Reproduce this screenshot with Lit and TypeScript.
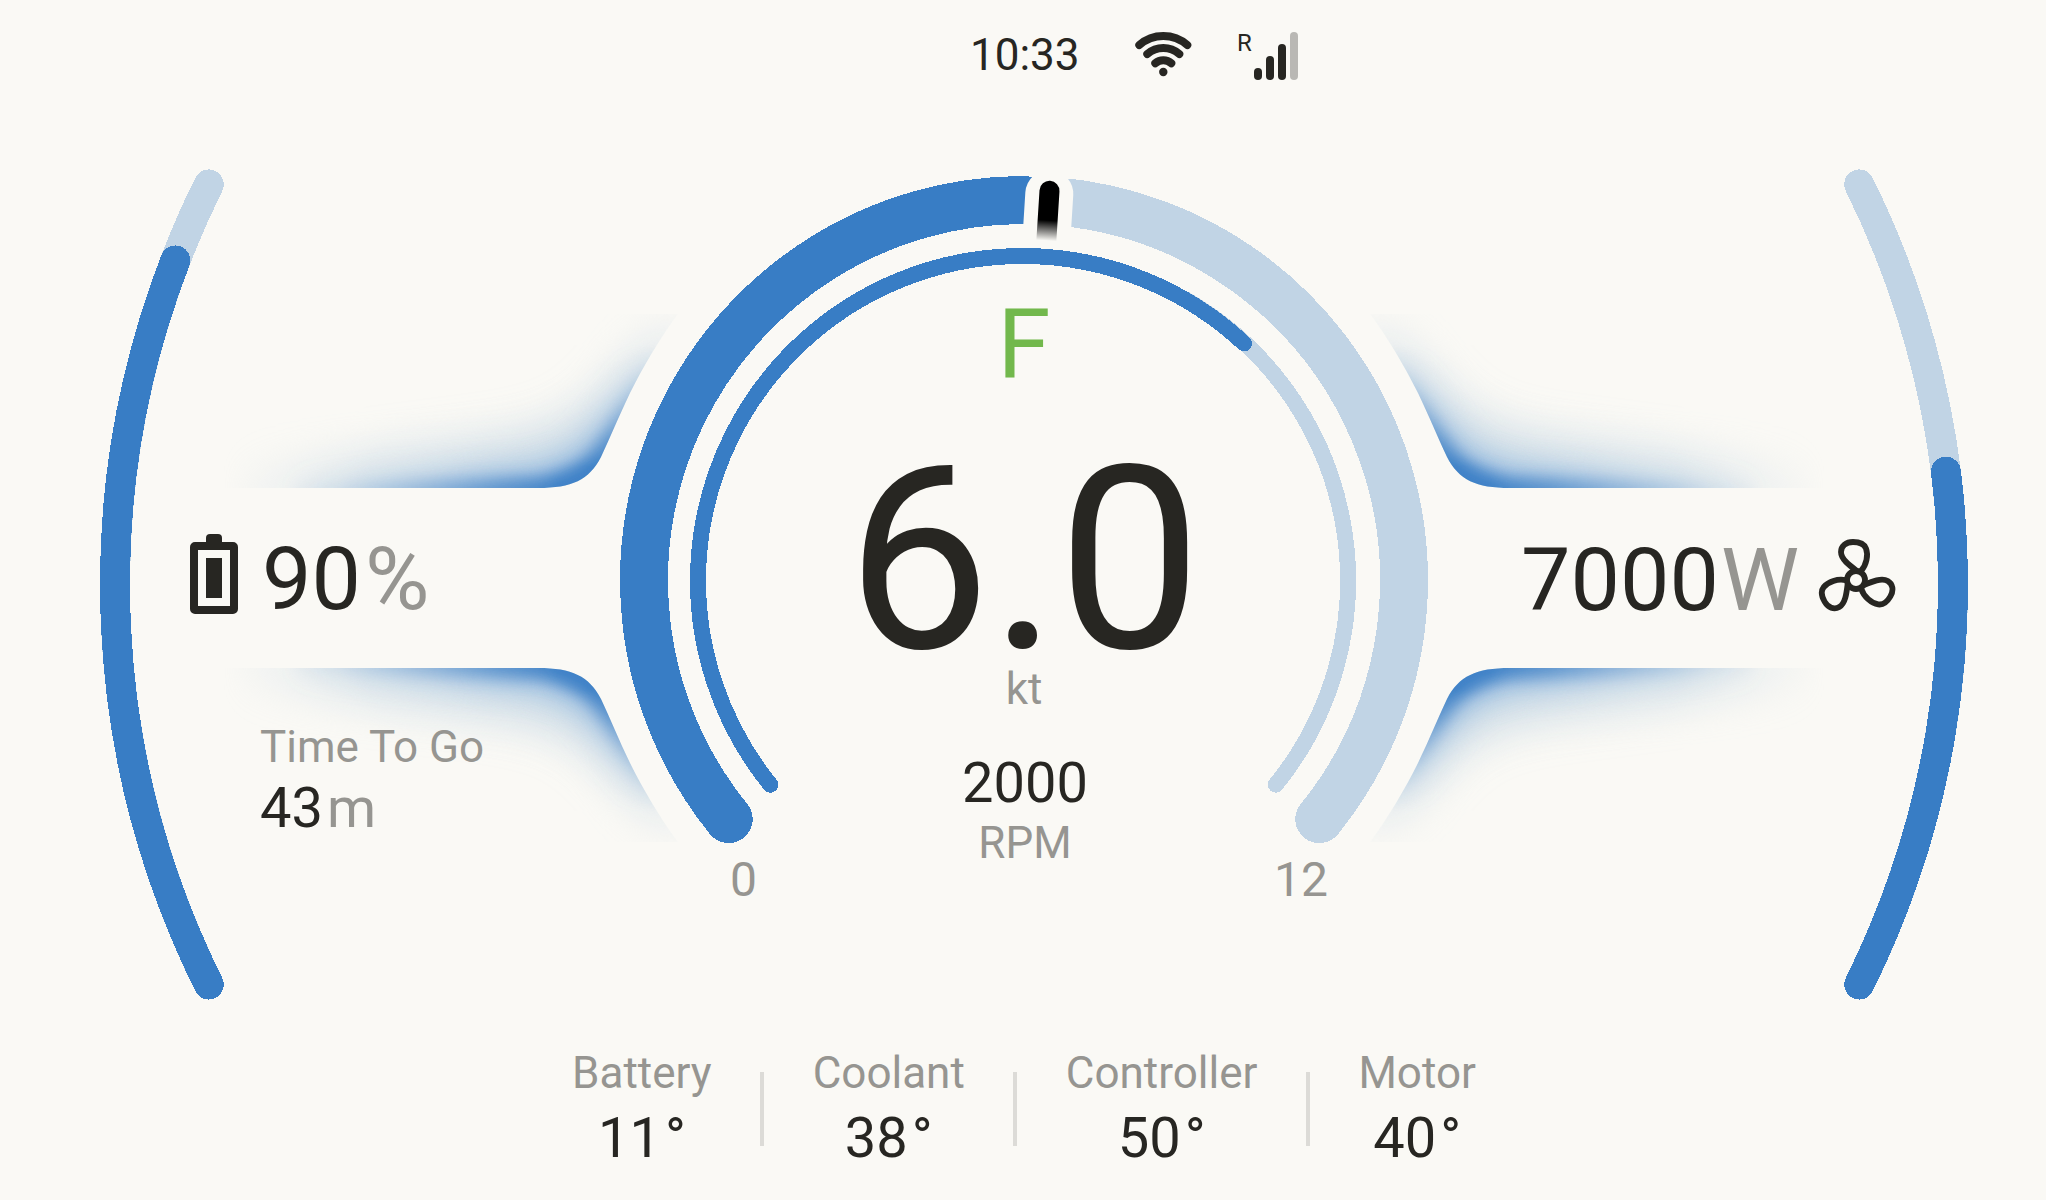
import { LitElement, html, svg, css } from "lit";
import { customElement, property } from "lit/decorators.js";

const polar = (cx: number, cy: number, r: number, deg: number) => {
  const a = (deg * Math.PI) / 180;
  return `${(cx + r * Math.sin(a)).toFixed(2)} ${(cy - r * Math.cos(a)).toFixed(2)}`;
};

// angles are degrees clockwise from 12 o'clock
const arc = (cx: number, cy: number, r: number, from: number, to: number) => {
  const large = Math.abs(to - from) > 180 ? 1 : 0;
  const sweep = to > from ? 1 : 0;
  return `M${polar(cx, cy, r, from)} A${r} ${r} 0 ${large} ${sweep} ${polar(cx, cy, r, to)}`;
};

@customElement("gauge-canvas")
export class GaugeCanvas extends LitElement {
  static styles = css`
    :host {
      display: block;
    }
    svg {
      display: block;
    }
    .arc {
      fill: none;
      stroke-linecap: round;
      shape-rendering: crispEdges;
    }
    .track {
      stroke: #c1d4e5;
    }
    .value {
      stroke: #387dc5;
    }
    .main {
      stroke-width: 48;
    }
    .inner {
      stroke-width: 16;
    }
    .side {
      stroke-width: 30;
    }
    .needle-gap {
      fill: #faf9f5;
    }
    .fade-mask {
      mask-type: alpha;
    }
  `;

  // upper right wing, the other three are mirrored copies
  wing() {
    return svg`
      <g clip-path="url(#wing-clip)">
        <g mask="url(#wing-mask)">
          <path
            d="M1350 300 L1385 298 Q1440 385 1474 406 Q1497 424 1560 433 L1840 470 V530 H1400 Z"
            fill="#c1d4e2" opacity="0.64" filter="url(#blur-wide)" />
        </g>
        <g mask="url(#wing-core-mask)">
          <path
            d="M1370 320 L1400 330 Q1440 400 1464 430 Q1482 453 1520 460 L1760 480 V530 H1400 Z"
            fill="#8fb6df" opacity="0.66" filter="url(#blur-mid)" />
          <path
            d="M1375 335 L1391 338 Q1431 412 1450 441 Q1466 468 1510 477 L1760 487 V530 H1400 Z"
            fill="#387dc5" opacity="0.94" filter="url(#blur-tight)" />
        </g>
      </g>
    `;
  }

  render() {
    return html`
      <svg width="2046" height="1200" viewBox="0 0 2046 1200">
        <defs>
          <clipPath id="wing-clip">
            <path
              d="M1370 314 C1388 338 1405 367 1418 393 C1430 418 1438 438 1447 457 C1459 480 1476 488 1510 488 H1826 V314 Z" />
          </clipPath>
          <filter id="blur-wide" filterUnits="userSpaceOnUse" x="1200" y="150" width="800" height="500">
            <feGaussianBlur stdDeviation="19" />
          </filter>
          <filter id="blur-mid" filterUnits="userSpaceOnUse" x="1200" y="150" width="800" height="500">
            <feGaussianBlur stdDeviation="12" />
          </filter>
          <filter id="blur-tight" filterUnits="userSpaceOnUse" x="1200" y="150" width="800" height="500">
            <feGaussianBlur stdDeviation="8" />
          </filter>
          <radialGradient
            id="wing-fade"
            gradientUnits="userSpaceOnUse"
            cx="0"
            cy="0"
            r="1"
            gradientTransform="translate(1460 480) scale(366 186)"
          >
            <stop offset="0.2" stop-color="#fff" />
            <stop offset="0.6" stop-color="#fff" stop-opacity="0.75" />
            <stop offset="0.85" stop-color="#fff" stop-opacity="0.25" />
            <stop offset="1" stop-color="#fff" stop-opacity="0" />
          </radialGradient>
          <radialGradient
            id="wing-core-fade"
            gradientUnits="userSpaceOnUse"
            cx="0"
            cy="0"
            r="1"
            gradientTransform="translate(1460 480) scale(310 138)"
          >
            <stop offset="0.1" stop-color="#fff" />
            <stop offset="0.3" stop-color="#fff" stop-opacity="0.8" />
            <stop offset="0.5" stop-color="#fff" stop-opacity="0.54" />
            <stop offset="0.8" stop-color="#fff" stop-opacity="0.16" />
            <stop offset="1" stop-color="#fff" stop-opacity="0" />
          </radialGradient>
          <mask id="wing-mask" class="fade-mask" maskUnits="userSpaceOnUse" x="1340" y="290" width="520" height="220">
            <rect x="1340" y="290" width="520" height="220" fill="url(#wing-fade)" />
          </mask>
          <mask id="wing-core-mask" class="fade-mask" maskUnits="userSpaceOnUse" x="1340" y="290" width="520" height="220">
            <rect x="1340" y="290" width="520" height="220" fill="url(#wing-core-fade)" />
          </mask>
          <linearGradient id="needle-fade" x1="0" y1="0" x2="0" y2="1">
            <stop offset="0.66" stop-color="#000" />
            <stop offset="1" stop-color="#000" stop-opacity="0" />
          </linearGradient>
        </defs>

        ${this.wing()}
        <g transform="translate(0 1156) scale(1 -1)">${this.wing()}</g>
        <g transform="translate(2048 0) scale(-1 1)">${this.wing()}</g>
        <g transform="translate(2048 1156) scale(-1 -1)">${this.wing()}</g>

        <path class="arc side track" d=${arc(1015, 584.5, 900, 243.61, 296.39)} />
        <path class="arc side value" d=${arc(1015, 584.5, 900, 243.61, 291.1)} />
        <path class="arc side track" d=${arc(1053, 584.5, 900, 116.39, 63.61)} />
        <path class="arc side value" d=${arc(1053, 584.5, 900, 116.39, 82.8)} />

        <path class="arc main track" d=${arc(1024, 580, 380, 5, 129)} />
        <path class="arc main value" d=${arc(1024, 580, 380, -129, 0)} />
        <path class="arc inner track" d=${arc(1023.6, 580.5, 324.5, 30, 129)} />
        <path class="arc inner value" d=${arc(1022.5, 580.5, 324.5, -129, 43.05)} />

        <g transform="translate(1 0) rotate(3.6 1024 580)">
          <path class="needle-gap" d="M1000 240 V193 a24 24 0 0 1 48 0 V240 Z" />
          <path fill="url(#needle-fade)" d="M1014 240 V190 a10 10 0 0 1 20 0 V240 Z" />
        </g>
      </svg>
    `;
  }
}

@customElement("temperature-item")
export class TemperatureItem extends LitElement {
  static styles = css`
    :host {
      display: flex;
      flex-direction: column;
      align-items: center;
      gap: 15px;
      line-height: 1;
    }
    .label {
      font-size: 44px;
      color: #969591;
    }
    .value {
      display: flex;
      gap: 4px;
      font-size: 56px;
      color: #272622;
    }
  `;

  @property() label = "";
  @property({ type: Number }) value = 0;

  render() {
    return html`
      <span class="label">${this.label}</span>
      <span class="value"><span>${this.value}</span><span>°</span></span>
    `;
  }
}

@customElement("app-root")
export class AppRoot extends LitElement {
  static styles = css`
    :host {
      display: block;
      position: relative;
      width: 2046px;
      height: 1200px;
      overflow: hidden;
      background: #faf9f5;
      color: #272622;
      font-family: Roboto, sans-serif;
      line-height: 1;
    }
    svg {
      display: block;
      flex: none;
    }
    .canvas {
      position: absolute;
      inset: 0;
    }
    .page {
      position: relative;
      display: grid;
      grid-template-rows: 100px 951px 149px;
      height: 100%;
    }
    .status {
      display: flex;
      align-items: flex-start;
      padding: 30px 0 0 970px;
    }
    .time {
      padding-top: 3px;
      width: 164px;
      font-size: 44px;
    }
    .region {
      padding-top: 1px;
      margin-left: 44px;
      width: 16px;
      font-size: 24px;
    }
    .main {
      display: grid;
      grid-template-columns: 620px 808px 1fr;
    }
    .muted {
      color: #969591;
    }
    .left {
      padding: 434px 0 0 190px;
    }
    .reading {
      display: flex;
      align-items: flex-start;
      font-size: 88px;
    }
    .reading span {
      padding-top: 1px;
    }
    .reading .unit {
      margin-left: 4px;
    }
    .left .reading svg {
      margin-right: 24px;
    }
    .right {
      display: flex;
      justify-content: flex-end;
      align-items: flex-start;
      padding: 435px 150px 0 0;
    }
    .right .reading .unit {
      margin-left: 2px;
    }
    .right .reading svg {
      margin: 1px 0 0 17px;
    }
    .time-to-go {
      padding: 102px 0 0 70px;
    }
    .time-to-go .title {
      font-size: 44px;
    }
    .time-to-go .amount {
      display: flex;
      gap: 4px;
      margin-top: 11px;
      font-size: 56px;
    }
    .dial {
      display: flex;
      flex-direction: column;
      align-items: center;
      padding-top: 196px;
    }
    .gear {
      font-size: 96px;
      color: #72b84c;
    }
    .speed {
      margin-top: 62px;
      font-size: 256px;
      line-height: 214px;
    }
    .caption {
      font-size: 44px;
    }
    .speed-unit {
      margin-top: -1px;
    }
    .rpm {
      margin-top: 44px;
      margin-left: 2px;
      font-size: 56px;
    }
    .rpm-unit {
      margin-top: 10px;
      margin-left: 2px;
    }
    .scale {
      display: flex;
      justify-content: space-between;
      width: 598px;
      margin: -9px 0 0 10px;
      font-size: 48px;
    }
    .temperatures {
      display: flex;
      justify-content: center;
      gap: 48.5px;
      padding-left: 2px;
    }
    .divider {
      width: 4px;
      height: 74px;
      margin-top: 21px;
      background: #dcdbd7;
    }
  `;

  temperatures = [
    { label: "Battery", value: 11 },
    { label: "Coolant", value: 38 },
    { label: "Controller", value: 50 },
    { label: "Motor", value: 40 },
  ];

  wifiIcon() {
    return html`
      <svg width="59" height="50" viewBox="0 0 59 50">
        <g fill="none" stroke="#272622" stroke-width="8" stroke-linecap="round">
          <path d="M5.3 15 A36.5 36.5 0 0 1 53.3 15" />
          <path d="M13.3 24 A24.3 24.3 0 0 1 45.3 24" />
          <path d="M21.3 33.3 A11.8 11.8 0 0 1 37.3 33.3" />
        </g>
        <circle cx="29.3" cy="42" r="4.2" fill="#272622" />
      </svg>
    `;
  }

  signalIcon() {
    return html`
      <svg width="46" height="52" viewBox="0 0 46 52" fill="#272622">
        <rect x="1" y="38" width="8" height="12" rx="4" />
        <rect x="13" y="26" width="8" height="24" rx="4" />
        <rect x="25" y="14" width="8" height="36" rx="4" />
        <rect x="37" y="2" width="8" height="48" rx="4" fill="#b9b8b4" />
      </svg>
    `;
  }

  batteryIcon() {
    return html`
      <svg width="48" height="80" viewBox="0 0 48 80" fill="#272622">
        <path d="M16 10 V4 a4 4 0 0 1 4 -4 h8 a4 4 0 0 1 4 4 v6 Z" />
        <rect x="4" y="12" width="40" height="64" rx="1" fill="none" stroke="#272622" stroke-width="8" stroke-linejoin="round" />
        <rect x="16" y="24" width="16" height="40" />
      </svg>
    `;
  }

  motorIcon() {
    const blade = "M45 35 C50.5 29 52.5 19 50 12.5 C48 7.5 43 6 37 6 C30 6 25 10 25 16 C25 23 33 29 41 35";
    return html`
      <svg width="80" height="80" viewBox="0 0 80 80" fill="none" stroke="#272622" stroke-width="5.8">
        <circle cx="40" cy="44" r="9" />
        ${[0, 120, 240].map((a) => svg`<path d=${blade} transform="rotate(${a} 40 44)" />`)}
      </svg>
    `;
  }

  render() {
    return html`
      <gauge-canvas class="canvas"></gauge-canvas>
      <div class="page">
        <header class="status">
          <span class="time">10:33</span>
          ${this.wifiIcon()}
          <span class="region">R</span>
          ${this.signalIcon()}
        </header>

        <main class="main">
          <section class="left">
            <div class="reading">
              ${this.batteryIcon()}
              <span>90</span><span class="unit muted">%</span>
            </div>
            <div class="time-to-go">
              <div class="title muted">Time To Go</div>
              <div class="amount"><span>43</span><span class="muted">m</span></div>
            </div>
          </section>

          <section class="dial">
            <div class="gear">F</div>
            <div class="speed">6.0</div>
            <div class="caption speed-unit muted">kt</div>
            <div class="rpm">2000</div>
            <div class="caption rpm-unit muted">RPM</div>
            <div class="scale muted"><span>0</span><span>12</span></div>
          </section>

          <section class="right">
            <div class="reading">
              <span>7000</span><span class="unit muted">W</span>
              ${this.motorIcon()}
            </div>
          </section>
        </main>

        <footer class="temperatures">
          ${this.temperatures.map(
            (t, i) => html`
              ${i > 0 ? html`<div class="divider"></div>` : ""}
              <temperature-item .label=${t.label} .value=${t.value}></temperature-item>
            `
          )}
        </footer>
      </div>
    `;
  }
}
